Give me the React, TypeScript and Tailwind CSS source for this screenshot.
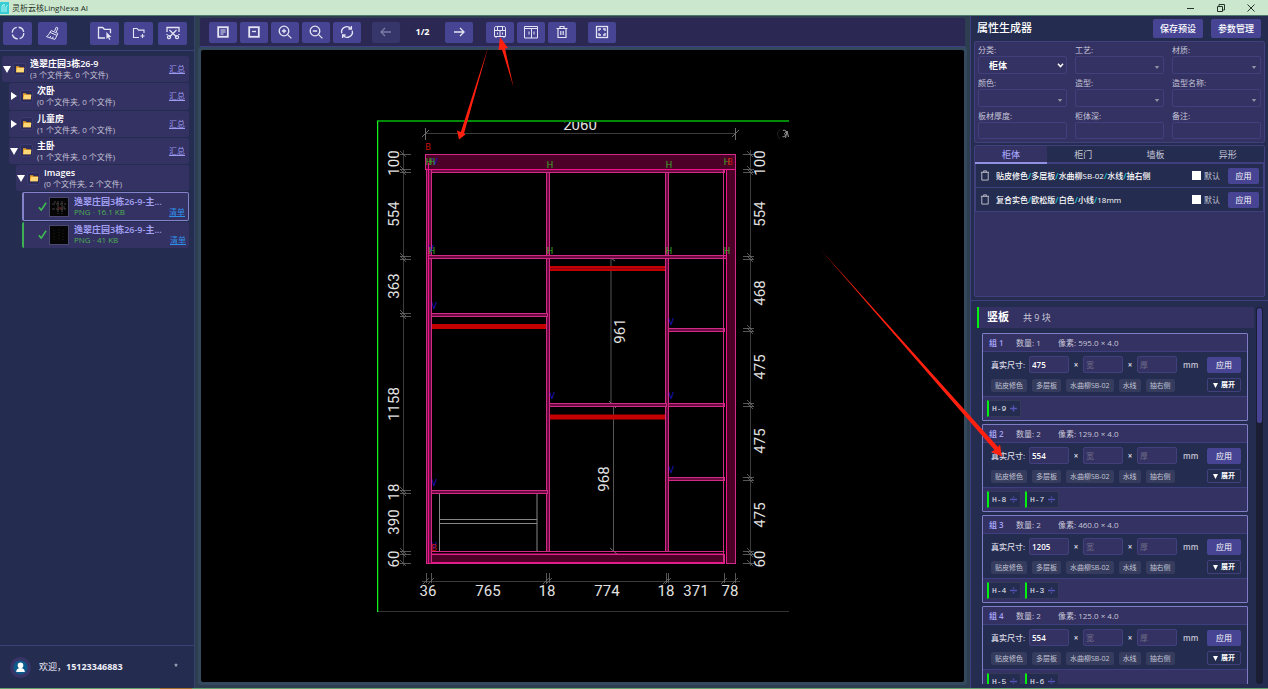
import React from "react";

const FONT = "font-['Open_Sans','Noto_Sans_CJK_SC',sans-serif]";

/* ---------- shared ---------- */

function ToolButton({ label, disabled, wide, children }: { label: string; disabled?: boolean; wide?: boolean; children: React.ReactNode }) {
  return (
    <button
      type="button"
      aria-label={label}
      disabled={disabled}
      className={`flex shrink-0 items-center justify-center rounded-xs ${wide ? "h-[23px] w-[29px]" : "h-[21px] w-7"} ${
        disabled ? "bg-[#37366b] text-[#7c7ba6]" : "bg-[#474593] text-[#e4e4f4]"
      }`}
    >
      <svg viewBox="0 0 16 16" className="h-4 w-4" fill="none" stroke="currentColor" strokeWidth="1.3">
        {children}
      </svg>
    </button>
  );
}

function Folder() {
  return (
    <span className="flex h-[13px] w-[13px] shrink-0 items-center justify-center rounded-xs border border-[#3c3a72] bg-[#2c2b5a]">
      <svg viewBox="0 0 12 10" className="h-2 w-[10px] shrink-0">
        <path d="M1 1.5h3.6l1 1.2H11v6.3H1z" fill="#e3a02a" />
        <path d="M2.4 3.8H11.4L10.6 9H1.2z" fill="#ffd978" />
      </svg>
    </span>
  );
}

/* ---------- sidebar ---------- */

type FolderRowProps = { name: string; info: string; open?: boolean; indent: string; summary?: boolean };

function FolderRow({ name, info, open, indent, summary = true }: FolderRowProps) {
  return (
    <li className={`flex min-h-0 flex-1 items-center rounded-xs bg-[#343163] pr-1 ${indent}`}>
      <button type="button" aria-label={open ? "收起" : "展开"} className="flex w-[9px] shrink-0 justify-center">
        <svg viewBox="0 0 8 8" className="h-2 w-2 fill-white">
          <path d={open ? "M0 1h8L4 8z" : "M1 0v8l6-4z"} />
        </svg>
      </button>
      <span className="ml-[2px] flex">
        <Folder />
      </span>
      <div className="ml-1 min-w-0 flex-1">
        <div className="truncate text-[9px] leading-[11px] font-semibold text-white">{name}</div>
        <div className="truncate text-[8px] leading-[11px] text-[#c4c4d6]">{info}</div>
      </div>
      {summary && (
        <a href="#summary" className="text-[8px] text-[#9d9bf0] underline">
          汇总
        </a>
      )}
    </li>
  );
}

function FileRow({ size, selected }: { size: string; selected?: boolean }) {
  return (
    <li
      className={`ml-5 flex min-h-0 flex-1 items-center rounded-xs bg-[#343163] pr-[3px] ${
        selected ? "border border-l-2 border-[#8482c8]" : "border-l-2 border-l-[#3fae54]"
      }`}
    >
      <svg viewBox="0 0 10 10" className="ml-[14px] h-[9px] w-[9px] shrink-0" fill="none" stroke="#3fb950" strokeWidth="1.8">
        <path d="M1 6l2.6 3L9 .8" />
      </svg>
      <svg viewBox="0 0 20 20" className="ml-[2px] h-5 w-5 shrink-0">
        <rect width="20" height="20" fill="#4a4a70" />
        <rect x="1" y="1" width="18" height="18" fill="#050505" />
        {selected ? (
          <g stroke="#6f6a6a" strokeWidth=".6" fill="none">
            <path d="M3 7h14M9 4v13M13 4v13M3 12h14M6 4v2M15 9v4" strokeDasharray="3 1" />
            <path d="M9 11h4" stroke="#b33" />
          </g>
        ) : (
          <path d="M5 5v10M10 4v12M14 5v10" stroke="#2e2e22" strokeWidth=".6" strokeDasharray="1 2" />
        )}
      </svg>
      <div className="ml-[5px] min-w-0 flex-1">
        <div className="truncate text-[9px] leading-[11px] font-semibold text-[#a3a1f5]">逸翠庄园3栋26-9-主...</div>
        <div className="text-[8px] leading-[10px] text-[#4caf50]">PNG · {size}</div>
      </div>
      <a href="#list" className="mt-[10px] -ml-3 text-[8px] text-[#2f8fe6] underline">
        清单
      </a>
    </li>
  );
}

function Sidebar() {
  return (
    <aside className="flex w-[195px] shrink-0 flex-col border-r border-[#34416b] bg-[#242c4f]">
      <div className="flex h-[35px] shrink-0 items-center border-b border-[#3f3f78] pl-[3px]">
        <div className="flex gap-[6px]">
          <ToolButton wide label="刷新">
            <circle cx="8" cy="8" r="5.8" strokeDasharray="7.1 2" />
          </ToolButton>
          <ToolButton wide label="清理">
            <path d="M9.6 6.2l1.6-4 1.7.8-1.6 4M6.2 5.6l6.6 2.8-.8 2-7-3zM4.800 7.400c-.7 2-1.800 3.400-3.400 4.200l8.400 2.800c.8-1 1.500-2.400 2-4M4.800 12.600l1-1.600M7.400 13.400l.8-1.800" strokeWidth="1" />
          </ToolButton>
        </div>
        <div className="ml-[23px] flex gap-[5px]">
          <ToolButton wide label="打开文件夹">
            <path d="M8 13H1.5V2.5h4.2l1.6 1.8h6.2v4" />
            <path d="M9.4 7v7l1.700-1.600 1.200 2.500 1-.5-1.100-2.400h2.200z" fill="currentColor" stroke="none" />
          </ToolButton>
          <ToolButton wide label="新建文件夹">
            <path d="M8 12.5H2.5v-9h3.6l1.300 1.600h5.600V8M11.5 9v4M9.5 11h4" strokeWidth="1.1" />
          </ToolButton>
          <ToolButton wide label="截图">
            <path d="M2 7V2.500H14V7M4.500 5l7 7M11.500 5l-7 7" />
            <path d="M2 9v1M14 9v1" />
            <circle cx="4" cy="12.200" r="1.500" />
            <circle cx="12" cy="12.200" r="1.500" />
          </ToolButton>
        </div>
      </div>
      <ul className="mx-[2px] mt-[5px] mr-[5px] flex h-[192px] shrink-0 flex-col gap-px">
        <FolderRow open indent="" name="逸翠庄园3栋26-9" info="(3 个文件夹, 0 个文件)" />
        <FolderRow indent="ml-[7px]" name="次卧" info="(0 个文件夹, 0 个文件)" />
        <FolderRow indent="ml-[7px]" name="儿童房" info="(1 个文件夹, 0 个文件)" />
        <FolderRow open indent="ml-[7px]" name="主卧" info="(1 个文件夹, 0 个文件)" />
        <FolderRow open indent="ml-[14px]" name="Images" info="(0 个文件夹, 2 个文件)" summary={false} />
        <FileRow size="16.1 KB" selected />
        <FileRow size="41 KB" />
      </ul>
      <footer className="mt-auto flex h-[43px] shrink-0 items-center border-t border-[#3f3f78] pr-4 pl-[10px] text-[9px] text-[#eeeef8]">
        <svg viewBox="0 0 21 21" className="h-[21px] w-[21px]">
          <circle cx="10.5" cy="10.5" r="10.5" fill="#393467" />
          <circle cx="10.5" cy="10.5" r="7" fill="#0c5a8c" />
          <circle cx="10.5" cy="8.4" r="2.8" fill="#fff" />
          <path d="M6.2 15c0-2.600 1.800-4 4.300-4s4.300 1.400 4.300 4z" fill="#fff" />
        </svg>
        <span className="ml-2">
          欢迎，<b className="font-bold">15123346883</b>
        </span>
        <svg viewBox="0 0 6 6" className="mb-1 ml-auto h-1 w-1 fill-[#a8a8c0]">
          <path d="M3 0l.8 2L6 2.400 4.200 3.600 4.800 6 3 4.600 1.200 6l.6-2.400L0 2.400 2.200 2z" />
        </svg>
      </footer>
    </aside>
  );
}

/* ---------- viewer ---------- */

function Toolbar() {
  return (
    <div className="flex h-[29px] shrink-0 items-center rounded-t-xs border-b border-[#3f3f80] bg-[#2b2854] pl-[9px]">
      <div className="flex gap-[3px]">
        <ToolButton label="图纸">
          <rect x="3.2" y="3.2" width="9.6" height="9.6" strokeWidth="1.8" />
          <path d="M5.5 6h5M5.5 8h5M5.5 10h3" strokeWidth="1" />
        </ToolButton>
        <ToolButton label="缩略">
          <rect x="3.2" y="3.2" width="9.6" height="9.6" strokeWidth="1.8" />
          <path d="M6 7.5h4" />
        </ToolButton>
        <ToolButton label="放大">
          <circle cx="7" cy="7" r="4.800" />
          <path d="M10.600 10.600L14.400 14.400M4.800 7h4.400M7 4.800v4.400" />
        </ToolButton>
        <ToolButton label="缩小">
          <circle cx="7" cy="7" r="4.800" />
          <path d="M10.600 10.600L14.400 14.400M4.800 7h4.400" />
        </ToolButton>
        <ToolButton label="重置">
          <path d="M2.800 9.400a5.300 5.300 0 0 1 9-5M13.200 6.600a5.300 5.300 0 0 1-9 5M12.400 2v3H9.400M3.600 14v-3h3" />
        </ToolButton>
      </div>
      <div className="ml-[11px] flex items-center">
        <ToolButton label="上一张" disabled>
          <path d="M13 8H3M7 4L3 8l4 4" />
        </ToolButton>
        <span className="w-[45px] text-center text-[9px] font-bold text-white">1/2</span>
        <ToolButton label="下一张">
          <path d="M3 8h10M9 4l4 4-4 4" />
        </ToolButton>
      </div>
      <div className="ml-[13px] flex gap-[3px]">
        <ToolButton label="识别柜体">
          <path d="M2.500 4.500c0-1.500.5-2 2-2h7c1.500 0 2 .5 2 2v8h-11zM2.500 6.500h11M8 6.500v6M5.500 3v3M10.500 3v3M5.500 8.500v2M10.500 8.500v2M4 12.500v1.500M12 12.500v1.500" strokeWidth="1" />
        </ToolButton>
        <ToolButton label="识别柜门">
          <path d="M1.500 2.500h13v11.500h-13zM1.500 4.500h13M8.500 4.500v9.500M6 7.500v3M11 7.500v3" strokeWidth="1" />
        </ToolButton>
        <ToolButton label="删除">
          <path d="M2.500 4.500h11M4 4.500v9h8v-9M6 4.500v-2h4v2M6.800 7v4M9.200 7v4" strokeWidth="1.200" />
        </ToolButton>
      </div>
      <div className="ml-3">
        <ToolButton label="全屏">
          <rect x="2.500" y="2.500" width="11" height="11" />
          <path d="M5 7V5h2M9 5h2v2M11 9v2H9M7 11H5V9" />
        </ToolButton>
      </div>
    </div>
  );
}

const LEFT_TICKS = [154, 169, 172, 256, 259, 313, 316, 490, 493, 551, 554, 563];
const RIGHT_TICKS = [154, 169, 172, 256, 259, 328, 331, 403, 406, 477, 480, 551, 554, 563];
const BOTTOM_TICKS = [426, 431, 546, 549, 666, 668, 724, 735];
const LEFT_DIMS: [string, number][] = [["100", 163], ["554", 214], ["363", 286], ["1158", 404], ["18", 492], ["390", 522], ["60", 559]];
const RIGHT_DIMS: [string, number][] = [["100", 163], ["554", 214], ["468", 293], ["475", 367], ["475", 441], ["475", 515], ["60", 559]];
const BOTTOM_DIMS: [string, number][] = [["36", 428], ["765", 488], ["18", 547], ["774", 607], ["18", 666], ["371", 696], ["78", 730]];
const GREEN_MARKS: [number, number][] = [[429, 165], [432, 165], [550, 168], [669, 168], [727, 165], [432, 254], [550, 254], [669, 254], [727, 254]];
const BLUE_MARKS: [number, number][] = [[435, 165], [431, 252], [434, 309], [671, 325], [552, 399], [671, 399], [434, 486], [671, 473], [434, 549]];
const RED_MARKS: [number, number][] = [[428, 150], [730, 165], [434, 551]];
/* x, y, width, height of each thin board */
const BOARDS: [number, number, number, number][] = [
  [426, 169, 5, 394],
  [431, 169, 293, 3],
  [546, 172, 3, 379],
  [665, 172, 3, 379],
  [428, 255, 298, 3],
  [431, 313, 116, 3],
  [549, 403, 117, 3],
  [668, 403, 56, 3],
  [668, 328, 56, 3],
  [668, 477, 56, 3],
  [431, 490, 116, 3],
];

function Drawing() {
  return (
    <svg viewBox="377 120 412 492" className="h-[492px] w-[412px] shrink-0 font-[Roboto,sans-serif]" fill="none" role="img" aria-label="柜体图纸">
      <path d="M377 611.500h412" stroke="#333" />
      <g stroke="#3c3c3c">
        <path d="M425 133.500h311M403.500 150v416M750.500 150v416M422 581.500h318" />
        <path d="M611 258v147M613.500 405v147" stroke="#555" />
      </g>
      <g stroke="#6c6c6c">
        <path d="M422 137l7-7M425.500 128v12M732 137l7-7M735.500 128v12M608 256l7 5M609 401l7 7M610 548l7 6" />
        {LEFT_TICKS.map((y) => (
          <path key={y} d={`M400 ${y - 3}l6 6M400 ${y + 0.5}h11`} strokeWidth=".8" />
        ))}
        {RIGHT_TICKS.map((y) => (
          <path key={y} d={`M747 ${y - 3}l6 6M743 ${y + 0.5}h11`} strokeWidth=".8" />
        ))}
        {BOTTOM_TICKS.map((x) => (
          <path key={x} d={`M${x - 3} 584l6-6M${x + 0.5} 573v10`} strokeWidth=".8" />
        ))}
      </g>
      <path d="M439.500 493v58M537 493v58M440 519.500h97M440 523.500h97" stroke="#868686" />
      <path d="M549 268.500h117M431 326.500h116M549 417h117" stroke="#c40000" strokeWidth="5" />
      <path d="M549 268.500h117" stroke="#8c0010" />
      <g stroke="#d12a86">
        <rect x="425.500" y="154.500" width="310" height="15" fill="#4c0028" />
        <rect x="726.500" y="169.500" width="9" height="394" fill="#4c0028" />
        <rect x="426.500" y="554.500" width="298" height="9" fill="#4c0028" />
        {BOARDS.map(([x, y, w, h]) => (
          <rect key={`${x}-${y}`} x={x + 0.5} y={y + 0.5} width={w} height={h} fill="#6a0a40" />
        ))}
        <path d="M431.500 551.500h293M723.500 169.500v394" />
      </g>
      <path d="M428.500 163v400M726.500 169v394M426 169.500h309M431 554h293M431 562.500h293" stroke="#f0148c" />
      <g fontSize="9" textAnchor="middle">
        <g fill="#1c14c8">{BLUE_MARKS.map(([x, y]) => <text key={`${x}-${y}`} x={x} y={y}>V</text>)}</g>
        <g fill="#3cae28">{GREEN_MARKS.map(([x, y]) => <text key={`${x}-${y}`} x={x} y={y}>H</text>)}</g>
        <g fill="#d01010">{RED_MARKS.map(([x, y]) => <text key={`${x}-${y}`} x={x} y={y}>B</text>)}</g>
      </g>
      <g fontSize="15" textAnchor="middle" fill="#e2e2e2">
        <text x="580" y="129.500">2060</text>
        {BOTTOM_DIMS.map(([t, x]) => (
          <text key={x} x={x} y="596">{t}</text>
        ))}
        {LEFT_DIMS.map(([t, y]) => (
          <text key={y} transform={`translate(399 ${y}) rotate(-90)`}>{t}</text>
        ))}
        {RIGHT_DIMS.map(([t, y]) => (
          <text key={y} transform={`translate(765 ${y}) rotate(-90)`}>{t}</text>
        ))}
        <text transform="translate(625 331) rotate(-90)">961</text>
        <text transform="translate(609 479) rotate(-90)">968</text>
      </g>
      <path d="M780 129q-5 5 0 10" stroke="#222" />
      <path d="M783 130.500c3-1 4 1 1.500 3 2 2 0 4-2 3M785.500 138l1.500-7 1.500 6" stroke="#aaa" strokeWidth=".9" />
      <path d="M377 121h412" stroke="#008a08" strokeWidth="2" />
      <path d="M377.500 121v491" stroke="#14f01c" strokeWidth="1.500" />
    </svg>
  );
}

function Viewer() {
  return (
    <main className="flex min-w-0 flex-1 flex-col bg-[#2c3e50] px-[3px] pt-[2px] pb-[3px]">
      <div className="mx-[2px] flex flex-col">
        <Toolbar />
      </div>
      <div className="flex min-h-0 flex-1 rounded-xs bg-[#34495e] p-[3px]">
        <div className="flex min-w-0 flex-1 items-center justify-center overflow-hidden rounded-xs bg-black">
          <Drawing />
        </div>
      </div>
    </main>
  );
}

/* ---------- attribute panel ---------- */

const FIELDS: { label: string; kind: "select" | "combo" | "input" }[] = [
  { label: "分类", kind: "select" },
  { label: "工艺", kind: "combo" },
  { label: "材质", kind: "combo" },
  { label: "颜色", kind: "combo" },
  { label: "造型", kind: "combo" },
  { label: "造型名称", kind: "combo" },
  { label: "板材厚度", kind: "input" },
  { label: "柜体深", kind: "input" },
  { label: "备注", kind: "input" },
];

function Field({ label, kind }: { label: string; kind: "select" | "combo" | "input" }) {
  const box = "block w-full appearance-none rounded-xs border border-[#42407c] bg-[#343163] text-white outline-none";
  return (
    <div className="min-w-0">
      <label htmlFor={`f-${label}`} className="block text-[8px] leading-3 text-[#c4c4d6]">
        {label}:
      </label>
      <div className="relative">
        {kind === "input" ? (
          <input id={`f-${label}`} className={`${box} h-[17px] px-1 text-[8px]`} />
        ) : (
          <select id={`f-${label}`} className={`${box} h-[18px] pl-[10px] text-[9px] leading-none font-semibold`}>
            <option>{kind === "select" ? "柜体" : ""}</option>
          </select>
        )}
        {kind === "select" && (
          <svg viewBox="0 0 8 6" className="pointer-events-none absolute top-[7px] right-[3px] h-[5px] w-[7px]" fill="none" stroke="#fff" strokeWidth="1.800">
            <path d="M1 1l3 3.400L7 1" />
          </svg>
        )}
        {kind === "combo" && (
          <svg viewBox="0 0 6 4" className="pointer-events-none absolute top-[10px] right-1 h-[3px] w-[6px] fill-[#9090a4]">
            <path d="M0 0h6L3 4z" />
          </svg>
        )}
      </div>
    </div>
  );
}

const TABS = ["柜体", "柜门", "墙板", "异形"];
const PRESETS = [
  ["贴皮修色", "多层板", "水曲柳SB-02", "水线", "抽右侧"],
  ["复合实色", "欧松版", "白色", "小线", "18mm"],
];

function Preset({ parts }: { parts: string[] }) {
  return (
    <li className="flex h-6 items-center border border-t-0 border-[#3f3f80] bg-[#242c4f] pr-1 pl-1">
      <button type="button" aria-label="删除预设" className="shrink-0">
        <svg viewBox="0 0 10 12" className="h-[11px] w-[10px]" fill="none" stroke="#c4c4d0">
          <path d="M.5 2.500h9M1.500 2.500v8.500h7V2.500M3.500 2.500v-1.500h3v1.500" />
        </svg>
      </button>
      <span className="ml-[6px] truncate text-[8px] font-medium text-white">
        {parts.map((p, i) => (
          <React.Fragment key={p}>
            {i > 0 && <span className="font-bold text-[#16b8c4]">/</span>}
            {p}
          </React.Fragment>
        ))}
      </span>
      <label className="ml-auto flex shrink-0 items-center gap-[3px] text-[8px] text-[#c4c4d6]">
        <input type="checkbox" className="h-[9px] w-[9px] appearance-none bg-white" />
        默认
      </label>
      <button type="button" className="ml-2 h-4 w-[31px] shrink-0 rounded-xs bg-[#474593] text-[8px] text-white">
        应用
      </button>
    </li>
  );
}

function SizeInput({ id, value, placeholder }: { id: string; value?: string; placeholder: string }) {
  return (
    <input
      id={id}
      aria-label={placeholder}
      defaultValue={value}
      placeholder={placeholder}
      className="h-[17px] w-10 min-w-0 shrink-0 rounded-xs border border-[#42407c] bg-[#343163] px-[2px] text-[8px] font-semibold text-white outline-none placeholder:font-normal placeholder:text-[#6e6c86]"
    />
  );
}

const GROUPS = [
  { n: 1, size: "475", px: "595.0", items: ["H-9"] },
  { n: 2, size: "554", px: "129.0", items: ["H-8", "H-7"] },
  { n: 3, size: "1205", px: "460.0", items: ["H-4", "H-3"] },
  { n: 4, size: "554", px: "125.0", items: ["H-5", "H-6"] },
];

function Group({ n, size, px, items }: (typeof GROUPS)[number]) {
  return (
    <article className="flex h-[88px] shrink-0 flex-col rounded-[1px] border border-[#7f7dc4] bg-[#242c4f] text-[8px]">
      <header className="flex h-[18px] items-center border-b border-[#3f3f80] bg-[#343163] pl-[6px] text-[#c8c8d8]">
        <b className="w-[27px] font-semibold text-[#a3a1f5]">组 {n}</b>
        <span className="w-[42px]">数量: {items.length}</span>
        <span>像素: {px} × 4.0</span>
      </header>
      <div className="flex flex-1 flex-col justify-center gap-[5px] pr-[6px] pl-2">
        <div className="flex items-center">
          <label htmlFor={`g-${n}`} className="w-[38px] font-medium whitespace-nowrap text-[#dadae6]">
            真实尺寸:
          </label>
          <SizeInput id={`g-${n}`} value={size} placeholder="长" />
          <span className="w-[14px] text-center font-bold text-[#d0d0dc]">×</span>
          <SizeInput id={`g-${n}-w`} placeholder="宽" />
          <span className="w-[14px] text-center font-bold text-[#d0d0dc]">×</span>
          <SizeInput id={`g-${n}-t`} placeholder="厚" />
          <span className="ml-[6px] font-semibold text-[#c4c4d6]">mm</span>
          <button type="button" className="ml-auto h-4 w-[34px] rounded-xs bg-[#474593] text-white">
            应用
          </button>
        </div>
        <div className="flex items-center gap-[5px]">
          {PRESETS[0].map((t) => (
            <span key={t} className="rounded-xs bg-[#353c5d] px-[4px] text-[7px] leading-[13px] whitespace-nowrap text-[#c4c4d6]">
              {t}
            </span>
          ))}
          <button type="button" className="ml-auto flex h-[14px] w-[34px] shrink-0 items-center justify-center gap-[3px] rounded-xs border border-[#42407c] text-[7px] font-bold text-white">
            <svg viewBox="0 0 6 6" className="h-[5px] w-[5px] fill-white">
              <path d="M0 0h6L3 6z" />
            </svg>
            展开
          </button>
        </div>
      </div>
      <footer className="flex h-6 items-center gap-1 border-t border-[#3f3f80] bg-[#343163] pl-1">
        {items.map((t) => (
          <button
            key={t}
            type="button"
            className="flex h-[17px] w-[34px] items-center border border-l-2 border-[#343a58] border-l-[#00f010] bg-[#242c4f] pl-[3px] font-['Liberation_Mono',monospace] text-[8px] text-[#e8e8f0]"
          >
            {t}
            <svg viewBox="0 0 8 8" className="ml-1 h-[7px] w-[7px]" stroke="#5654b8" strokeWidth="1.600">
              <path d={items.length === 1 ? "M0 4h8M4 .5v7" : "M0 4h8M4 .5v1.500M4 6v1.500"} />
            </svg>
          </button>
        ))}
      </footer>
    </article>
  );
}

function AttributePanel() {
  return (
    <aside className="flex w-[298px] shrink-0 flex-col border-l border-[#3f3f80] bg-[#242c4f]">
      <header className="flex h-[25px] shrink-0 items-center gap-2 pr-[7px] pl-[6px]">
        <h1 className="mr-auto text-[11px] font-medium text-white">属性生成器</h1>
        <button type="button" className="h-[19px] w-[50px] rounded-xs bg-[#474593] text-[9px] font-medium text-white">
          保存预设
        </button>
        <button type="button" className="h-[19px] w-[50px] rounded-xs bg-[#474593] text-[9px] font-medium text-white">
          参数管理
        </button>
      </header>
      <form className="mr-[3px] ml-[3px] grid shrink-0 grid-cols-3 gap-x-2 gap-y-[3px] rounded-xs border border-[#42407c] bg-[#343163] px-[3px] pt-[2px] pb-[3px]">
        {FIELDS.map((f) => (
          <Field key={f.label} {...f} />
        ))}
      </form>
      <section className="mx-[3px] mt-[2px] h-[152px] shrink-0 rounded-xs border border-[#42407c] bg-[#343163]">
        <div role="tablist" className="grid h-[18px] grid-cols-4">
          {TABS.map((t, i) => (
            <button
              key={t}
              type="button"
              role="tab"
              aria-selected={i === 0}
              className={`border-b-2 text-[9px] leading-none ${
                i === 0 ? "border-[#918fe0] bg-[#343163] font-medium text-[#a3a1f5]" : "border-[#3f3f80] bg-[#242c4f] text-[#c8c8d8]"
              }`}
            >
              {t}
            </button>
          ))}
        </div>
        <ul>
          {PRESETS.map((p) => (
            <Preset key={p[0]} parts={p} />
          ))}
        </ul>
      </section>
      <section className="mt-[3px] flex min-h-0 flex-1 border-t border-[#3f3f80] pr-[5px] pb-1 pl-[6px]">
        <div className="mt-[6px] flex min-w-0 flex-1 flex-col overflow-hidden">
          <h2 className="flex h-[21px] shrink-0 items-center border-l-2 border-[#00f010] bg-[#343163] pl-2 text-[11px] font-bold text-white">
            竖板<small className="ml-[14px] text-[9px] font-normal text-[#c8c8d8]">共 9 块</small>
          </h2>
          <div className="mt-[5px] mr-[6px] ml-[5px] flex flex-col gap-[3px]">
            {GROUPS.map((g) => (
              <Group key={g.n} {...g} />
            ))}
          </div>
        </div>
        <div className="mt-[6px] ml-[2px] w-[7px] shrink-0 rounded-full bg-[#1b1d33] p-px">
          <div className="h-[115px] rounded-full bg-[#474593]" />
        </div>
      </section>
    </aside>
  );
}

/* ---------- annotations ---------- */

function Arrows() {
  return (
    <svg viewBox="0 0 1268 689" className="pointer-events-none absolute top-0 left-0 h-[689px] w-[1268px]" fill="#ff2010" aria-hidden="true">
      <path d="M488.500 46L464 133.400 465.500 134.500 459 139.500 457 130.500 460.800 132z" />
      <path d="M513.500 87L505 48.500 508 48 500 37 498.500 50 502 49.500z" />
      <path d="M821 250L998 447 1000 444.500 1002 456.500 991 452 994.500 450z" />
    </svg>
  );
}

export default function App() {
  return (
    <div className={`relative flex h-screen w-full flex-col overflow-hidden bg-[#242c4f] ${FONT}`}>
      <header className="flex h-4 shrink-0 items-center border-b border-[#4d7a6c] bg-[#cbe8cf] text-[8px] leading-none text-[#1c2a20]">
        <svg viewBox="0 0 9 12" className="h-3 w-[9px]">
          <rect width="9" height="12" fill="#38cdd6" />
          <path d="M2 10V4l2-2v8M6 10V5l1.500-2" stroke="#b4f4f0" fill="none" />
        </svg>
        <span className="ml-[3px]">灵析云核LingNexa AI</span>
        <div className="mr-[13px] ml-auto flex gap-[22px]">
          {["M0 4.500h7", "M.5 2.500h5v5h-5zM2 2.500V.5h5.500v5.500H5.500", "M.5.500l7 7M7.500.500l-7 7"].map((d, i) => (
            <button key={d} type="button" aria-label={["最小化", "还原", "关闭"][i]}>
              <svg viewBox="0 0 8 8" className="h-2 w-2" fill="none" stroke="#25342a">
                <path d={d} />
              </svg>
            </button>
          ))}
        </div>
      </header>
      <div className="flex min-h-0 flex-1">
        <Sidebar />
        <Viewer />
        <AttributePanel />
      </div>
      <div className="flex h-px shrink-0 bg-[#62a06c]">
        <div className="ml-40 w-8 bg-[#a0702c]" />
      </div>
      <Arrows />
    </div>
  );
}
